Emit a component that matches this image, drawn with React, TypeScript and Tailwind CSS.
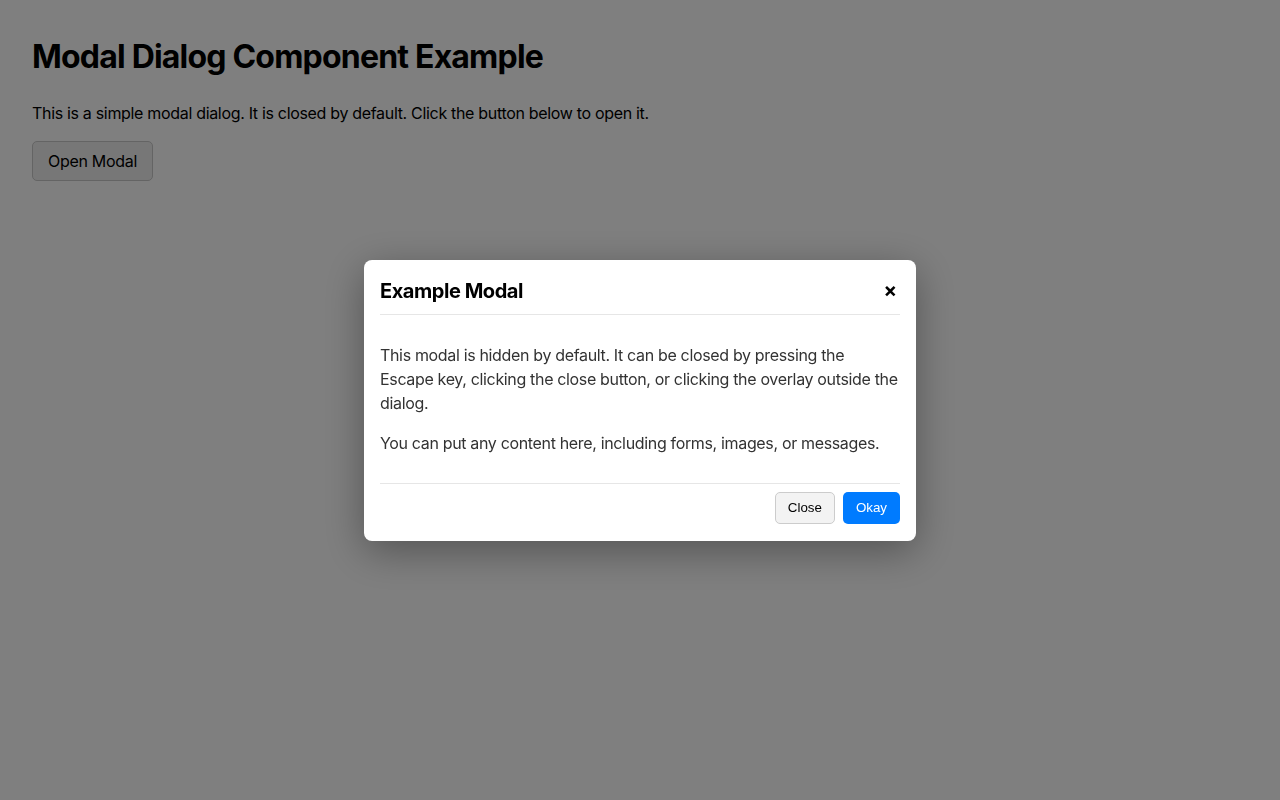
import React, { useState, useEffect } from "react";

export default function App() {
  const [open, setOpen] = useState(true);

  useEffect(() => {
    const onKey = (e: KeyboardEvent) => {
      if (e.key === "Escape") setOpen(false);
    };
    window.addEventListener("keydown", onKey);
    return () => window.removeEventListener("keydown", onKey);
  }, []);

  return (
    <div
      className="min-h-[800px] bg-white text-black"
      style={{ fontFamily: "Inter, 'Noto Sans', sans-serif" }}
    >
      <div className="px-8 pt-[38px]">
        <h1 className="text-[32px] font-bold leading-[38px] tracking-[-0.8px]">
          Modal Dialog Component Example
        </h1>
        <p className="mt-[25px] text-base leading-6 tracking-[-0.32px]">
          This is a simple modal dialog. It is closed by default. Click the button below to open it.
        </p>
        <button
          onClick={() => setOpen(true)}
          className="mt-4 h-10 rounded-[5px] border border-[#c8c8c8] bg-[#efefef] px-[15px] text-base tracking-[-0.3px]"
        >
          Open Modal
        </button>
      </div>

      {open && (
        <div
          className="fixed inset-0 flex items-center justify-center bg-black/50"
          onClick={() => setOpen(false)}
        >
          <div
            role="dialog"
            aria-modal="true"
            onClick={(e) => e.stopPropagation()}
            className="w-[552px] rounded-lg bg-white p-4 pb-[17px] shadow-[0_10px_40px_rgba(0,0,0,0.35)]"
          >
            <div className="flex items-center justify-between border-b border-[#e6e6e6] pb-2">
              <h2 className="text-xl font-bold leading-[30px] tracking-[-0.45px]">Example Modal</h2>
              <button
                onClick={() => setOpen(false)}
                aria-label="Close"
                className="mr-[3px] -mt-[2px] text-[20px] font-bold leading-none"
              >
                ×
              </button>
            </div>
            <div className="border-b border-[#e6e6e6] py-3 text-base leading-6 tracking-[-0.34px] text-[#333]">
              <p className="my-4">
                This modal is hidden by default. It can be closed by pressing the Escape key, clicking the close
                button, or clicking the overlay outside the dialog.
              </p>
              <p className="my-4">You can put any content here, including forms, images, or messages.</p>
            </div>
            <div
              className="flex justify-end gap-2 pt-2"
              style={{ fontFamily: "'Liberation Sans', Arial, sans-serif" }}
            >
              <button
                onClick={() => setOpen(false)}
                className="h-8 rounded-[5px] border border-[#ccc] bg-[#f3f3f3] px-3 text-[13.33px] text-black"
              >
                Close
              </button>
              <button
                onClick={() => setOpen(false)}
                className="h-8 rounded-[5px] bg-[#007bff] px-[13px] text-[13.33px] text-white"
              >
                Okay
              </button>
            </div>
          </div>
        </div>
      )}
    </div>
  );
}
